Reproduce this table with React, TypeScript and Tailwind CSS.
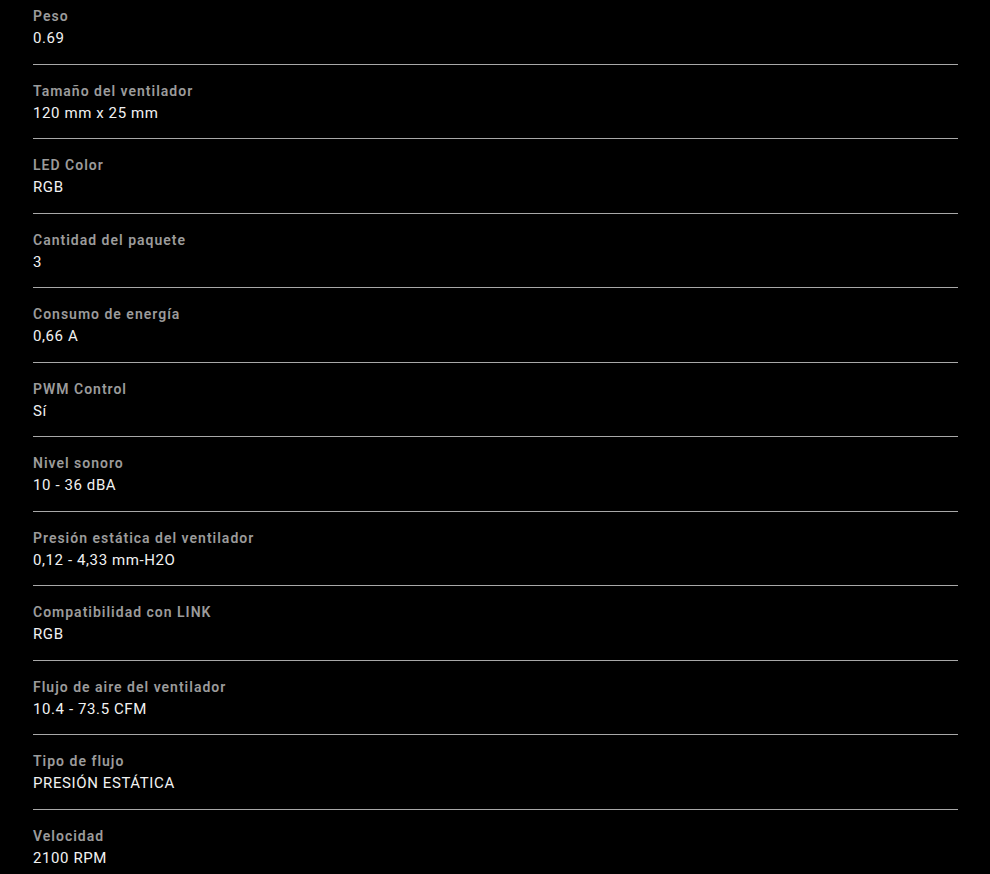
import React from 'react'

const SPECS = [
  { label: 'Peso', value: '0.69' },
  { label: 'Tamaño del ventilador', value: '120 mm x 25 mm' },
  { label: 'LED Color', value: 'RGB' },
  { label: 'Cantidad del paquete', value: '3' },
  { label: 'Consumo de energía', value: '0,66 A' },
  { label: 'PWM Control', value: 'Sí' },
  { label: 'Nivel sonoro', value: '10 - 36 dBA' },
  { label: 'Presión estática del ventilador', value: '0,12 - 4,33 mm-H2O' },
  { label: 'Compatibilidad con LINK', value: 'RGB' },
  { label: 'Flujo de aire del ventilador', value: '10.4 - 73.5 CFM' },
  { label: 'Tipo de flujo', value: 'PRESIÓN ESTÁTICA' },
  { label: 'Velocidad', value: '2100 RPM' }
]

export default function App(): React.ReactElement {
  return (
    <div className="min-h-screen w-full bg-black font-['Roboto','Liberation_Sans',sans-serif] overflow-hidden">
      <ul className="ml-[33px] mr-[32px]">
        {SPECS.map((s, i) => (
          <li
            key={s.label}
            className={
              i === SPECS.length - 1
                ? 'pt-[15px]'
                : i === 0
                  ? 'pt-[5px] pb-[14.5px] border-b border-[#a8a8a8]'
                  : 'pt-[15px] pb-[14.5px] border-b border-[#a8a8a8]'
            }
          >
            <div className="h-[22px] leading-[22px] text-[14px] font-semibold tracking-[1px] text-[#9b9b9b]">
              {s.label}
            </div>
            <div className="h-[22px] leading-[22px] text-[15px] tracking-[0.6px] text-[#f2f2f2]">
              {s.value}
            </div>
          </li>
        ))}
      </ul>
    </div>
  )
}
